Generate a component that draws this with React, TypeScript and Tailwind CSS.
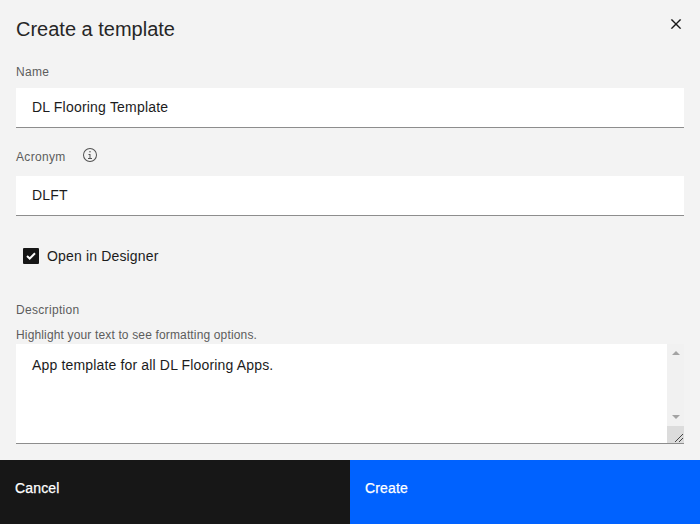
export default function App() {
  return (
    <main className="flex h-[524px] w-[700px] flex-col overflow-hidden bg-[#f3f3f3] font-['Liberation_Sans',Arial,sans-serif] text-[#1c1c1c]">
      <header className="flex h-[64px] shrink-0 items-start justify-between pl-4">
        <h1 className="pt-[15px] text-[20px] leading-7 text-[#262626]">Create a template</h1>
        <button aria-label="Close" className="flex h-12 w-12 items-center justify-center text-[#161616]">
          <svg width="20" height="20" viewBox="0 0 32 32" fill="currentColor" stroke="currentColor" strokeWidth="0.3"><path d="M24 9.4 22.6 8 16 14.6 9.4 8 8 9.4l6.6 6.6L8 22.6 9.4 24l6.6-6.6 6.6 6.6 1.4-1.4-6.6-6.6L24 9.4z" /></svg>
        </button>
      </header>
      <form className="flex h-[396px] shrink-0 flex-col px-4">
        <label className="h-6 text-[12px] leading-4 tracking-[0.32px] text-[#5c5c5c]">Name</label>
        <input defaultValue="DL Flooring Template" className="h-10 shrink-0 border-b border-[#8d8d8d] bg-white px-4 pb-[2px] text-[14px] tracking-[0.2px] outline-none" />
        <div className="flex h-12 shrink-0 items-start gap-4 pt-[19px]">
          <label className="pt-[2px] text-[12px] leading-4 tracking-[0.32px] text-[#5c5c5c]">Acronym</label>
          <svg width="16" height="16" viewBox="0 0 32 32" fill="#525252"><path d="M17 22v-8h-4v2h2v6h-3v2h8v-2h-3zM16 8a1.5 1.5 0 1 0 0 3 1.5 1.5 0 0 0 0-3z" /><path d="M16 30a14 14 0 1 1 0-28 14 14 0 0 1 0 28zm0-26a12 12 0 1 0 0 24 12 12 0 0 0 0-24z" /></svg>
        </div>
        <input defaultValue="DLFT" className="h-10 shrink-0 border-b border-[#8d8d8d] bg-white px-4 pb-[2px] text-[14px] tracking-[0.16px] outline-none" />
        <label className="mt-[30px] flex h-5 shrink-0 items-center gap-2 pl-[7px] text-[14px] tracking-[0.16px]">
          <span className="flex h-4 w-4 items-center justify-center rounded-[1px] bg-[#161616]">
            <svg width="10" height="8" viewBox="0 0 10 8" fill="none" stroke="white" strokeWidth="2"><path d="m1 4 2.7 2.5L9 1.3" /></svg>
          </span>
          Open in Designer
        </label>
        <label className="mt-9 h-[25px] shrink-0 text-[12px] leading-4 tracking-[0.32px] text-[#5c5c5c]">Description</label>
        <p className="h-[17px] shrink-0 text-[12px] leading-4 tracking-[0.15px] text-[#5c5c5c]">Highlight your text to see formatting options.</p>
        <div className="flex h-[100px] shrink-0 border-b border-[#8d8d8d] bg-white">
          <p className="flex-1 px-4 pt-[11px] text-[14px] leading-5 tracking-[0.16px]">App template for all DL Flooring Apps.</p>
          <div className="flex w-[17px] flex-col bg-[#f1f1f1]">
            <div className="flex flex-1 flex-col items-center justify-between py-[7px] text-[#a3a3a3]">
              <svg width="8" height="4" viewBox="0 0 8 4" fill="currentColor"><path d="m0 4 4-4 4 4z" /></svg>
              <svg width="8" height="4" viewBox="0 0 8 4" fill="currentColor"><path d="m0 0 4 4 4-4z" /></svg>
            </div>
            <svg className="bg-[#dcdcdc]" width="17" height="17" viewBox="0 0 17 17" stroke="#444"><path d="m8 16 8-8m-4 8 4-4" /></svg>
          </div>
        </div>
      </form>
      <footer className="flex h-16 shrink-0 text-[14px] leading-[18px] tracking-[0.16px] text-white [-webkit-text-stroke:0.25px_white]">
        <button className="flex flex-1 items-start bg-[#171717] pt-[19px] pl-[15px]">Cancel</button>
        <button className="flex flex-1 items-start bg-[#0062ff] pt-[19px] pl-[15px]">Create</button>
      </footer>
    </main>
  );
}
